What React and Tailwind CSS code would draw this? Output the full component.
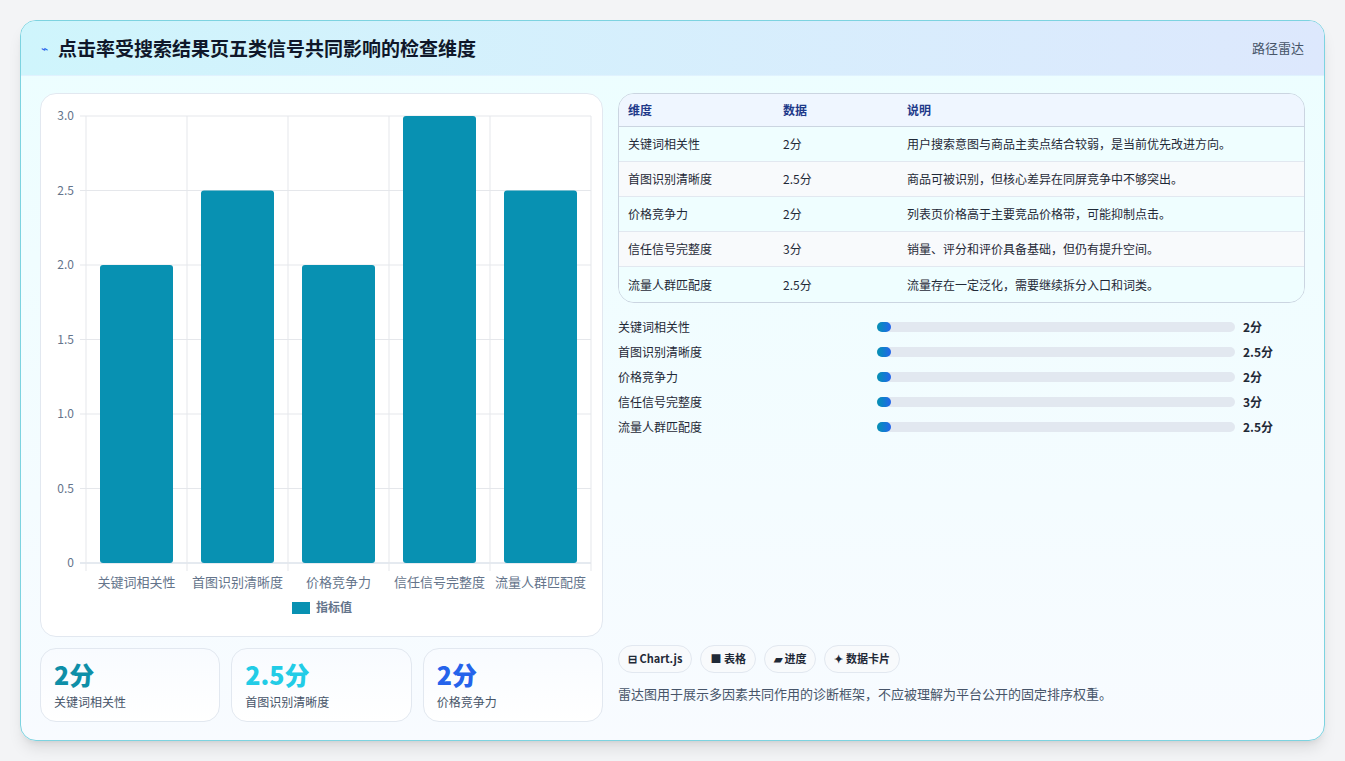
import React from "react";

const rows = [
  ["关键词相关性", "2分", "用户搜索意图与商品主卖点结合较弱，是当前优先改进方向。", 2],
  ["首图识别清晰度", "2.5分", "商品可被识别，但核心差异在同屏竞争中不够突出。", 2.5],
  ["价格竞争力", "2分", "列表页价格高于主要竞品价格带，可能抑制点击。", 2],
  ["信任信号完整度", "3分", "销量、评分和评价具备基础，但仍有提升空间。", 3],
  ["流量人群匹配度", "2.5分", "流量存在一定泛化，需要继续拆分入口和词类。", 2.5],
];

function Chart() {
  const x0 = 45, x1 = 550, yTop = 22, yBot = 469;
  const h = yBot - yTop;
  const ticks = [0, 0.5, 1, 1.5, 2, 2.5, 3];
  const cw = (x1 - x0) / 5;
  return (
    <svg width="561" height="542" className="block" style={{ fontFamily: '"Noto Sans CJK SC", sans-serif' }}>
      {ticks.map((t) => {
        const y = yBot - (t / 3) * h;
        return (
          <g key={t}>
            <line x1={x0 - 6} x2={x1} y1={y} y2={y} stroke={t === 0 ? "#cbd5e1" : "#e5e7eb"} />
            <text x={x0 - 12} y={y + 4} textAnchor="end" fontSize="12" fill="#64748b">
              {t === 0 ? "0" : t.toFixed(1)}
            </text>
          </g>
        );
      })}
      {[0, 1, 2, 3, 4, 5].map((i) => (
        <line key={i} x1={x0 + i * cw} x2={x0 + i * cw} y1={yTop} y2={yBot + 8} stroke="#e5e7eb" />
      ))}
      {rows.map((r, i) => {
        const bh = (r[3] / 3) * h;
        return (
          <g key={i}>
            <rect x={x0 + i * cw + 14} y={yBot - bh} width={cw - 28} height={bh} rx="3" fill="#0891b2" />
            <text x={x0 + i * cw + cw / 2} y={yBot + 24} textAnchor="middle" fontSize="13" fill="#64748b">
              {r[0]}
            </text>
          </g>
        );
      })}
      <rect x="251" y="508" width="18" height="12" fill="#0891b2" />
      <text x="275" y="518" fontSize="12" fill="#64748b" fontWeight="600">指标值</text>
    </svg>
  );
}

export default function App() {
  return (
    <div className="w-[1345px] h-[761px] bg-[#f3f4f6] p-[20px] pb-[20px]" style={{ fontFamily: '"Noto Sans CJK SC", "Noto Sans", sans-serif' }}>
      <div className="h-[721px] rounded-2xl border border-[#7dd3e0] bg-gradient-to-b from-[#ecfeff] to-[#f8fbff] overflow-hidden shadow-lg flex flex-col">
        <div className="h-[55px] shrink-0 flex items-center justify-between px-[20px] bg-gradient-to-r from-[#cff5fc] to-[#dde8fd] border-b border-[#e0f2fe]">
          <div className="flex items-center gap-[10px]">
            <span className="text-[#2563eb] text-[12px]">⌁</span>
            <span className="text-[19px] font-bold text-[#0f172a]">点击率受搜索结果页五类信号共同影响的检查维度</span>
          </div>
          <span className="text-[13px] text-[#475569]">路径雷达</span>
        </div>
        <div className="flex gap-[15px] px-[19px] pt-[17px]">
          <div className="w-[563px] flex flex-col gap-[11px]">
            <div className="h-[544px] rounded-2xl border border-[#e2e8f0] bg-white">
              <Chart />
            </div>
            <div className="grid grid-cols-3 gap-[11px]">
              {[["2分", "关键词相关性", "text-[#0e8fa8]"], ["2.5分", "首图识别清晰度", "text-[#22cce6]"], ["2分", "价格竞争力", "text-[#2563eb]"]].map(([v, l, c]) => (
                <div key={l} className="h-[74px] rounded-2xl border border-[#e2e8f0] bg-gradient-to-b from-[#f8fbff] to-white px-[13px] pt-[8px]">
                  <div className={`text-[25px] font-extrabold leading-[34px] ${c}`}>{v}</div>
                  <div className="text-[12px] text-[#475569] mt-[2px]">{l}</div>
                </div>
              ))}
            </div>
          </div>
          <div className="w-[688px] flex flex-col">
            <div className="rounded-2xl border border-[#cbd5e1] overflow-hidden text-[12px]">
              <div className="h-[33px] flex items-center bg-[#eff6ff] border-b border-[#cbd5e1] text-[#1e3a8a] font-semibold">
                <div className="w-[164px] pl-[9px]">维度</div>
                <div className="w-[124px]">数据</div>
                <div>说明</div>
              </div>
              {rows.map((r, i) => (
                <div key={i} className={`h-[35px] flex items-center text-[#1f2937] ${i % 2 ? "bg-[#f8fafc]" : "bg-[#effeff]"} ${i < 4 ? "border-b border-[#e2e8f0]" : ""}`}>
                  <div className="w-[164px] pl-[9px]">{r[0]}</div>
                  <div className="w-[124px]">{r[1]}</div>
                  <div>{r[2]}</div>
                </div>
              ))}
            </div>
            <div className="mt-[11px] flex flex-col">
              {rows.map((r, i) => (
                <div key={i} className="h-[25px] flex items-center text-[12px] text-[#1f2937]">
                  <div className="w-[259px]">{r[0]}</div>
                  <div className="w-[358px] h-[10px] rounded-full bg-[#e2e8f0]">
                    <div className="w-[14px] h-[10px] rounded-full bg-gradient-to-r from-[#0891b2] to-[#2563eb]" />
                  </div>
                  <div className="ml-[8px] font-bold">{r[1]}</div>
                </div>
              ))}
            </div>
            <div className="mt-auto flex gap-[8px] text-[11px] font-semibold text-[#1f2937]">
              {["⊟ Chart.js", "■ 表格", "▰ 进度", "✦ 数据卡片"].map((t) => (
                <span key={t} className="h-[28px] px-[9px] flex items-center rounded-full border border-[#e2e8f0] bg-[#f8fafc]">{t}</span>
              ))}
            </div>
            <div className="mt-[11px] mb-[19px] text-[13px] text-[#475569]">雷达图用于展示多因素共同作用的诊断框架，不应被理解为平台公开的固定排序权重。</div>
          </div>
        </div>
      </div>
    </div>
  );
}
